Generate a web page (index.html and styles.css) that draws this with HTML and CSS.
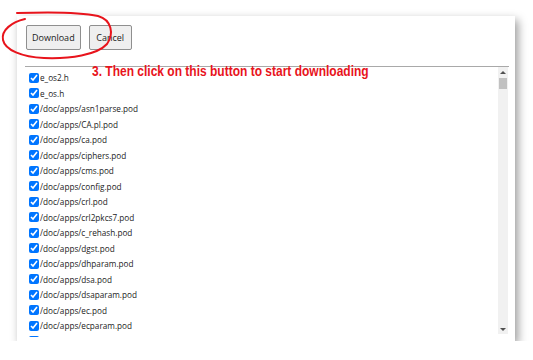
FILE: index.html
```html
<!DOCTYPE html>
<html lang="en">
<head>
  <meta charset="UTF-8" />
  <title>Download files</title>
  <link rel="stylesheet" href="styles.css">
</head>
<body>
  <div class="dialog">
    <div class="actions">
      <button type="button" class="btn">Download</button>
      <button type="button" class="btn btn-cancel">Cancel</button>
    </div>

    <div class="file-box">
      <div class="file-list">
        <label><input type="checkbox" checked> e_os2.h</label>
        <label><input type="checkbox" checked> e_os.h</label>
        <label><input type="checkbox" checked> /doc/apps/asn1parse.pod</label>
        <label><input type="checkbox" checked> /doc/apps/CA.pl.pod</label>
        <label><input type="checkbox" checked> /doc/apps/ca.pod</label>
        <label><input type="checkbox" checked> /doc/apps/ciphers.pod</label>
        <label><input type="checkbox" checked> /doc/apps/cms.pod</label>
        <label><input type="checkbox" checked> /doc/apps/config.pod</label>
        <label><input type="checkbox" checked> /doc/apps/crl.pod</label>
        <label><input type="checkbox" checked> /doc/apps/crl2pkcs7.pod</label>
        <label><input type="checkbox" checked> /doc/apps/c_rehash.pod</label>
        <label><input type="checkbox" checked> /doc/apps/dgst.pod</label>
        <label><input type="checkbox" checked> /doc/apps/dhparam.pod</label>
        <label><input type="checkbox" checked> /doc/apps/dsa.pod</label>
        <label><input type="checkbox" checked> /doc/apps/dsaparam.pod</label>
        <label><input type="checkbox" checked> /doc/apps/ec.pod</label>
        <label><input type="checkbox" checked> /doc/apps/ecparam.pod</label>
        <label class="cut"><input type="checkbox" checked></label>
      </div>

      <!-- scrollbar (hidden by the headless browser, so drawn here) -->
      <div class="scrollbar">
        <span class="arrow arrow-up"></span>
        <div class="track"><span class="thumb"></span></div>
        <span class="arrow arrow-down"></span>
      </div>
    </div>
  </div>

  <!-- annotation drawn over the screenshot -->
  <p class="note">3. Then click on this button to start downloading</p>
  <svg class="scribble" width="130" height="70" viewBox="0 0 130 70">
    <path d="M17 13 C45 12 80 12 98 16 C112 20 114 34 107 44 C97 55 70 59 44 58 C22 57 5 50 3 40 C1 30 12 22 25 19"
          fill="none" stroke="#e8141c" stroke-width="2" stroke-linecap="round"/>
  </svg>
</body>
</html>
```

FILE: styles.css
```css
body {
  margin: 0;
  background-color: #ffffff;
  font-family: "Open Sans", "Noto Sans", sans-serif;
  color: #222222;
}

.dialog {
  width: 498px;
  height: 325px;
  margin: 16px 0 0 17px;
  background-color: #ffffff;
  box-shadow: 3px 4px 9px rgba(0, 0, 0, 0.4);
  display: flex;
  flex-direction: column;
}

.actions {
  display: flex;
  gap: 8px;
  padding: 9px 0 0 9px;
  height: 41px;
}

.btn {
  height: 25px;
  padding: 0 5px;
  font-family: "Open Sans", "Noto Sans", sans-serif;
  font-size: 9px;
  color: #222222;
  background-color: #efefef;
  border: 1px solid #8f8f8f;
  border-radius: 2px;
}

.btn-cancel {
  min-width: 43px;
}

.file-box {
  display: flex;
  margin: 0 6px 0 8px;
  height: 270px;
  border-top: 1px solid #a9a9a9;
}

.file-list {
  flex: 1;
  overflow: hidden;
  padding: 3px 0 0 4px;
  font-size: 8.2px;
}

.file-list label {
  display: flex;
  align-items: center;
  gap: 1px;
  height: 15.5px;
  white-space: nowrap;
}

.file-list input {
  width: 10px;
  height: 10px;
  margin: 0;
  accent-color: #0075ff;
}

.scrollbar {
  width: 10px;
  margin: 0 1px 3px 0;
  background-color: #f1f1f1;
  display: flex;
  flex-direction: column;
}

.arrow {
  height: 10px;
  display: flex;
  align-items: center;
  justify-content: center;
}

.arrow::before {
  content: "";
  border-left: 3px solid transparent;
  border-right: 3px solid transparent;
}

.arrow-up::before {
  border-bottom: 3px solid #505050;
}

.arrow-down::before {
  border-top: 3px solid #505050;
}

.track {
  flex: 1;
  padding: 1px 1px 0;
}

.thumb {
  display: block;
  height: 11px;
  background-color: #c1c1c1;
}

.note {
  position: absolute;
  left: 92px;
  top: 62px;
  margin: 0;
  font-family: "Liberation Sans", Arial, sans-serif;
  font-weight: bold;
  font-size: 15px;
  color: #e8141c;
  white-space: nowrap;
  transform: scaleX(0.8);
  transform-origin: left top;
}

.scribble {
  position: absolute;
  left: 0;
  top: 0;
}
```
